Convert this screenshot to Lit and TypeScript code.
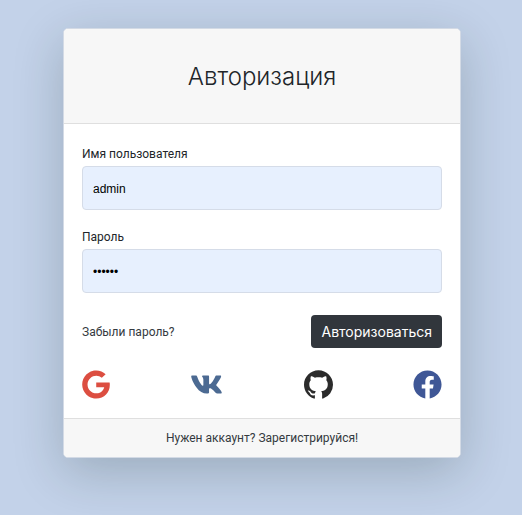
import { LitElement, html, css } from "lit";
import { customElement, state } from "lit/decorators.js";

interface Provider {
  name: string;
  viewBox: string;
  path: string;
}

const PROVIDERS: Provider[] = [
  {
    name: "google",
    viewBox: "0 0 488 512",
    path: "M488 261.8C488 403.3 391.1 504 248 504 110.8 504 0 393.2 0 256S110.8 8 248 8c66.8 0 123 24.5 166.3 64.9l-67.5 64.9C258.5 52.6 94.3 116.6 94.3 256c0 86.5 69.1 156.6 153.7 156.6 98.2 0 135-70.4 140.8-106.9H248v-85.3h236.1c2.3 12.7 3.9 24.9 3.9 41.4z",
  },
  {
    name: "vk",
    viewBox: "0 0 576 512",
    path: "M545 117.7c3.7-12.5 0-21.7-17.8-21.7h-58.9c-15 0-21.9 7.9-25.6 16.7 0 0-30 73.1-72.4 120.5-13.7 13.7-20 18.1-27.5 18.1-3.7 0-9.4-4.4-9.4-16.9V117.7c0-15-4.2-21.7-16.6-21.7h-92.6c-9.4 0-15 7-15 13.5 0 14.2 21.2 17.5 23.4 57.5v86.8c0 19-3.4 22.5-10.9 22.5-20 0-68.6-73.4-97.4-157.4-5.8-16.3-11.5-22.9-26.6-22.9H38.8c-16.8 0-20.2 7.9-20.2 16.7 0 15.6 20 93.1 93.1 195.5C160.4 378.1 229 416 291.4 416c37.5 0 42.1-8.4 42.1-22.9 0-66.8-3.4-73.1 15.4-73.1 8.7 0 23.7 4.4 58.7 38.1 40 40 46.6 57.9 69 57.9h58.9c16.8 0 25.3-8.4 20.4-25-11.2-34.9-86.9-106.7-90.3-111.5-8.7-11.2-6.2-16.2 0-26.2.1-.1 72-101.3 79.4-135.6z",
  },
  {
    name: "github",
    viewBox: "0 -0.2 16 16",
    path: "M8 0C3.58 0 0 3.58 0 8c0 3.54 2.29 6.53 5.47 7.59.4.07.55-.17.55-.38 0-.19-.01-.82-.01-1.49-2.01.37-2.53-.49-2.69-.94-.09-.23-.48-.94-.82-1.13-.28-.15-.68-.52-.01-.53.63-.01 1.08.58 1.23.82.72 1.21 1.87.87 2.33.66.07-.52.28-.87.51-1.07-1.78-.2-3.64-.89-3.64-3.95 0-.87.31-1.59.82-2.15-.08-.2-.36-1.02.08-2.12 0 0 .67-.21 2.2.82.64-.18 1.32-.27 2-.27s1.36.09 2 .27c1.53-1.04 2.2-.82 2.2-.82.44 1.1.16 1.92.08 2.12.51.56.82 1.27.82 2.15 0 3.07-1.87 3.75-3.65 3.95.29.25.54.73.54 1.48 0 1.07-.01 1.93-.01 2.2 0 .21.15.46.55.38A8.01 8.01 0 0 0 16 8c0-4.42-3.58-8-8-8z",
  },
  {
    name: "facebook",
    viewBox: "0 0 512 512",
    path: "M504 256C504 119 393 8 256 8S8 119 8 256c0 123.78 90.69 226.38 209.25 245V327.69h-63V256h63v-54.64c0-62.15 37-96.48 93.67-96.48 27.14 0 55.52 4.84 55.52 4.84v61h-31.28c-30.8 0-40.41 19.12-40.41 38.73V256h68.78l-11 71.69h-57.78V501C413.31 482.38 504 379.78 504 256z",
  },
];

@customElement("app-root")
export class AppRoot extends LitElement {
  static styles = css`
    :host {
      display: block;
      box-sizing: border-box;
      min-height: 100vh;
      padding: 28px 61px 57px 63px;
      background: #c3d2e9;
      color: #212529;
      font: 12px/18px Roboto, "Liberation Sans", sans-serif;
    }
    .card {
      max-width: 480px;
      margin: 0 auto;
      border: 1px solid #d3dae5;
      border-radius: 5px;
      background: #fff;
      box-shadow: 0 14px 50px rgba(15, 35, 30, 0.22);
    }
    .header,
    .footer {
      background: #f7f7f7;
      text-align: center;
    }
    .header {
      padding: 33px 18px 31px;
      border-bottom: 1px solid #dfdfdf;
      border-radius: 4px 4px 0 0;
    }
    .footer {
      padding: 10px 18px;
      border-top: 1px solid #dfdfdf;
      border-radius: 0 0 4px 4px;
    }
    .title {
      margin: 0;
      font-family: Inter, "Liberation Sans", sans-serif;
      font-size: 24px;
      line-height: 30px;
      font-weight: 300;
    }
    .body {
      padding: 21px 18px 19px;
    }
    .field {
      display: flex;
      flex-direction: column;
      gap: 3px;
      margin-bottom: 18px;
    }
    .input {
      box-sizing: border-box;
      width: 100%;
      height: 44px;
      padding: 2px 10px 0;
      border: 1px solid #d5dce8;
      border-radius: 4px;
      background: #e7f0fe;
      color: #000;
      font: 12px/18px "Liberation Sans", sans-serif;
    }
    .actions {
      display: flex;
      align-items: center;
      justify-content: space-between;
      margin: 22px 0;
    }
    .link {
      color: #343a40;
      text-decoration: none;
    }
    .submit {
      padding: 6px 10px;
      border: 0;
      border-radius: 4px;
      background: #31363c;
      color: #fff;
      font: 14px/21px Inter, "Liberation Sans", sans-serif;
    }
    .providers {
      display: flex;
      justify-content: space-between;
    }
    .icon {
      display: block;
      width: 28px;
      height: 29px;
      fill: currentColor;
    }
    .google {
      color: #dc4e41;
    }
    .vk {
      color: #4c6a92;
    }
    .vk .icon {
      width: 33px;
    }
    .github {
      color: #2b2b2b;
    }
    .facebook {
      color: #3f5796;
    }
    .github .icon,
    .facebook .icon {
      width: 29px;
    }
  `;

  @state() private username = "admin";
  @state() private password = "secret";

  render() {
    return html`
      <main class="card">
        <header class="header"><h1 class="title">Авторизация</h1></header>
        <form class="body" @submit=${(e: Event) => e.preventDefault()}>
          <div class="field">
            <label for="username">Имя пользователя</label>
            <input
              class="input"
              id="username"
              type="text"
              .value=${this.username}
              @input=${(e: Event) => (this.username = (e.target as HTMLInputElement).value)}
            />
          </div>
          <div class="field">
            <label for="password">Пароль</label>
            <input
              class="input"
              id="password"
              type="password"
              .value=${this.password}
              @input=${(e: Event) => (this.password = (e.target as HTMLInputElement).value)}
            />
          </div>
          <div class="actions">
            <a class="link" href="#forgot">Забыли пароль?</a>
            <button class="submit" type="submit">Авторизоваться</button>
          </div>
          <nav class="providers">
            ${PROVIDERS.map(
              (p) => html`
                <a class=${p.name} href="#${p.name}" aria-label=${p.name}>
                  <svg class="icon" viewBox=${p.viewBox} aria-hidden="true"><path d=${p.path}></path></svg>
                </a>
              `,
            )}
          </nav>
        </form>
        <footer class="footer">
          <a class="link" href="#register">Нужен аккаунт? Зарегистрируйся!</a>
        </footer>
      </main>
    `;
  }
}
